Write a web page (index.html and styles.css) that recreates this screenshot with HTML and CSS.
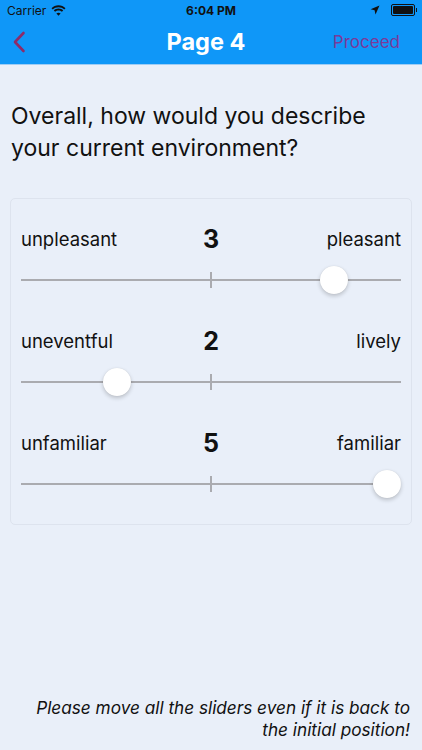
FILE: index.html
```html
<!DOCTYPE html>
<html lang="en">
<head>
    <meta charset="UTF-8">
    <meta name="viewport" content="width=device-width, initial-scale=1.0">
    <title>Page 4</title>
    <link rel="stylesheet" href="styles.css">
</head>
<body>
    <div class="screen">
        <div class="header">
            <div class="status-bar">
                <div class="status-left">
                    <span>Carrier</span>
                    <svg class="wifi" width="15" height="11" viewBox="0 0 15 11">
                        <path d="M7.5 2.2c2.2 0 4.2.9 5.7 2.3l1.3-1.3C12.7 1.4 10.2.3 7.5.3S2.3 1.4.5 3.2l1.3 1.3C3.3 3.1 5.3 2.2 7.5 2.2z" fill="#111"/>
                        <path d="M7.5 5.4c1.3 0 2.5.5 3.4 1.3l1.3-1.3C11 4.2 9.3 3.5 7.5 3.5S4 4.2 2.8 5.4l1.3 1.3c.9-.8 2.1-1.3 3.4-1.3z" fill="#111"/>
                        <path d="M7.5 10.7l2.1-2.1c-.6-.5-1.3-.8-2.1-.8s-1.5.3-2.1.8z" fill="#111"/>
                    </svg>
                </div>
                <div class="status-time">6:04 PM</div>
                <div class="status-right">
                    <svg width="10" height="10" viewBox="0 0 10 10">
                        <path d="M9.5.5L.6 4.3l4 .9.9 4.2z" fill="#111"/>
                    </svg>
                    <div class="battery"><div class="battery-level"></div></div>
                </div>
            </div>
            <div class="nav-bar">
                <div class="nav-back">
                    <svg width="14" height="22" viewBox="0 0 14 22">
                        <path d="M11.5 2L3 11l8.5 9" fill="none" stroke="#8d2b69" stroke-width="2.6" stroke-linecap="round" stroke-linejoin="round"/>
                    </svg>
                </div>
                <div class="nav-title">Page 4</div>
                <div class="nav-action">Proceed</div>
            </div>
        </div>

        <div class="content">
            <h1 class="question">Overall, how would you describe your current environment?</h1>

            <div class="card">
                <div class="scale">
                    <div class="scale-labels">
                        <span class="label-left">unpleasant</span>
                        <span class="scale-value">3</span>
                        <span class="label-right">pleasant</span>
                    </div>
                    <div class="slider">
                        <div class="track"></div>
                        <div class="tick"></div>
                        <div class="thumb" style="left: 299px"></div>
                    </div>
                </div>
                <div class="scale">
                    <div class="scale-labels">
                        <span class="label-left">uneventful</span>
                        <span class="scale-value">2</span>
                        <span class="label-right">lively</span>
                    </div>
                    <div class="slider">
                        <div class="track"></div>
                        <div class="tick"></div>
                        <div class="thumb" style="left: 82px"></div>
                    </div>
                </div>
                <div class="scale">
                    <div class="scale-labels">
                        <span class="label-left">unfamiliar</span>
                        <span class="scale-value">5</span>
                        <span class="label-right">familiar</span>
                    </div>
                    <div class="slider">
                        <div class="track"></div>
                        <div class="tick"></div>
                        <div class="thumb" style="left: 352px"></div>
                    </div>
                </div>
            </div>
        </div>

        <p class="footer-note">Please move all the sliders even if it is back to the initial position!</p>
    </div>
</body>
</html>
```

FILE: styles.css
```css
body {
    margin: 0;
    font-family: Inter, "Liberation Sans", sans-serif;
    background-color: #e9eff9;
    color: #111;
}

.screen {
    width: 422px;
    height: 750px;
    display: flex;
    flex-direction: column;
    overflow: hidden;
}

/* Blue header with status bar and navigation */
.header {
    background-color: #0f97f8;
    border-bottom: 1px solid #9fcdf5;
}

.status-bar {
    height: 20px;
    display: flex;
    align-items: center;
    justify-content: space-between;
    padding: 0 7px;
    font-size: 12px;
    color: #111;
}

.status-left {
    display: flex;
    align-items: center;
    gap: 5px;
    width: 100px;
}

.status-time {
    font-weight: 700;
}

.status-right {
    display: flex;
    align-items: center;
    justify-content: flex-end;
    gap: 11px;
    width: 100px;
}

.battery {
    width: 20px;
    height: 8px;
    border: 1px solid #111;
    border-radius: 2px;
    padding: 1px;
    position: relative;
}

.battery::after {
    content: "";
    position: absolute;
    right: -3px;
    top: 3px;
    width: 1px;
    height: 4px;
    background: #111;
}

.battery-level {
    width: 100%;
    height: 100%;
    background: #111;
    border-radius: 1px;
}

.nav-bar {
    height: 44px;
    display: flex;
    align-items: center;
    justify-content: space-between;
    padding: 0 22px 0 12px;
}

.nav-back {
    width: 80px;
    display: flex;
    align-items: center;
}

.nav-title {
    color: #fff;
    font-size: 23.5px;
    font-weight: 700;
    margin-top: -2px;
}

.nav-action {
    width: 80px;
    text-align: right;
    color: #7a3a9a;
    font-size: 17px;
}

/* Main content */
.content {
    padding: 0 10px;
}

.question {
    margin: 35px 20px 34px 0;
    padding-left: 1px;
    font-size: 23px;
    font-weight: 400;
    line-height: 32px;
}

.card {
    border: 1px solid #dde3ee;
    border-radius: 5px;
    padding: 26px 10px 25px;
    display: flex;
    flex-direction: column;
    gap: 32px;
}

.scale-labels {
    height: 28px;
    display: flex;
    align-items: center;
    justify-content: space-between;
    position: relative;
    font-size: 18.5px;
}

.scale-value {
    position: absolute;
    left: 50%;
    transform: translateX(-50%);
    font-size: 25px;
    font-weight: 700;
}

.slider {
    height: 30px;
    margin-top: 12px;
    position: relative;
}

.track {
    position: absolute;
    left: 0;
    right: 0;
    top: 14px;
    height: 2px;
    background-color: #aaabb0;
}

.tick {
    position: absolute;
    left: 189px;
    top: 7px;
    width: 2px;
    height: 16px;
    background-color: #aaabb0;
}

.thumb {
    position: absolute;
    top: 1px;
    width: 28px;
    height: 28px;
    border-radius: 50%;
    background-color: #fff;
    box-shadow: 0 2px 4px rgba(0, 0, 0, 0.2), 0 0 1px rgba(0, 0, 0, 0.12);
}

.footer-note {
    margin: auto 12px 9px 20px;
    text-align: right;
    font-size: 17.2px;
    font-style: italic;
    line-height: 22px;
}
```
